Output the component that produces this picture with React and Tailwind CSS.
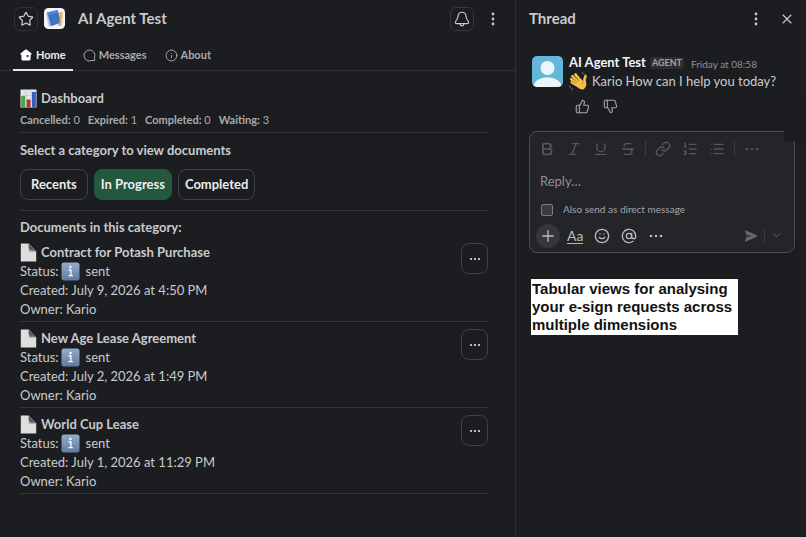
import React from "react";
import {
  Bold,
  ChevronDown,
  Info,
  Italic,
  List,
  ListOrdered,
  Plus,
  Smile,
  Star,
  Strikethrough,
  ThumbsUp,
  Underline,
  AtSign,
  X,
} from "lucide-react";

const stats = [
  { label: "Cancelled:", value: 0 },
  { label: "Expired:", value: 1 },
  { label: "Completed:", value: 0 },
  { label: "Waiting:", value: 3 },
];

const categories = ["Recents", "In Progress", "Completed"];

const documents = [
  { title: "Contract for Potash Purchase", created: "July 9, 2026 at 4:50 PM", owner: "Kario" },
  { title: "New Age Lease Agreement", created: "July 2, 2026 at 1:49 PM", owner: "Kario" },
  { title: "World Cup Lease", created: "July 1, 2026 at 11:29 PM", owner: "Kario" },
];

function AppLogo() {
  return (
    <svg viewBox="0 0 21 21" className="h-[21px] w-[21px] shrink-0" aria-hidden="true">
      <rect width="21" height="21" rx="4.5" fill="#f3f5f7" />
      <path d="M2.2 6L4.6 18.4L7.6 18.2L5 5Z" fill="#b9c9df" />
      <path d="M3.2 4.6L13.6 2L17.4 14.6L7 18.2Z" fill="#3f73c4" />
      <path d="M3.2 4.6L13.6 2L14.4 4.6L4 7.4Z" fill="#5585d0" />
      <path d="M15.6 4L18.8 4.6L17.8 18L13.8 17.6L15.4 14.8Z" fill="#c9a063" />
      <path d="M17 4.3L18.8 4.6L17.8 18L16.2 17.8Z" fill="#e3c592" />
    </svg>
  );
}

function HomeIcon() {
  return (
    <svg viewBox="0 0 12 12" className="h-3 w-3" aria-hidden="true">
      <path
        d="M5.1.8Q6 .1 6.9.8L11.3 4.2Q12 4.9 11.4 5.6Q11.1 6 10.6 5.9V10Q10.6 11.6 9 11.6H3Q1.4 11.6 1.4 10V5.9Q.9 6 .6 5.6Q0 4.9.7 4.2Z"
        fill="#fff"
      />
      <circle cx="7.6" cy="7" r="1.1" fill="#1d1e22" />
    </svg>
  );
}

function MessagesIcon() {
  return (
    <svg viewBox="0 0 13 13" className="h-[13px] w-[13px]" fill="none" stroke="currentColor" aria-hidden="true">
      <path d="M6.5 1A5.5 5.5 0 1 0 8.8 11.5H11.6Q12 11.5 11.9 11L11.2 9.2A5.5 5.5 0 0 0 6.5 1Z" strokeLinejoin="round" />
    </svg>
  );
}

function BellIcon() {
  return (
    <svg
      viewBox="0 0 16 16"
      className="h-4 w-4"
      fill="none"
      stroke="currentColor"
      strokeWidth="1.1"
      strokeLinejoin="round"
      aria-hidden="true"
    >
      <path d="M8 1.2C5.4 1.2 4.1 3.2 3.9 5.6C3.8 7.6 3.2 8.6 1.8 10.2C.8 11.6 1.4 12.6 3 12.6H13C14.6 12.6 15.2 11.6 14.2 10.2C12.8 8.6 12.2 7.6 12.1 5.6C11.9 3.2 10.6 1.2 8 1.2Z" />
      <path d="M6 12.8Q6.4 14.9 8 14.9T10 12.8" />
    </svg>
  );
}

function ChartEmoji() {
  return (
    <svg viewBox="0 0 17 19" className="h-[19px] w-[17px]" role="img" aria-label="bar chart">
      <rect x=".5" y=".5" width="16" height="18" fill="#dfe7ee" />
      <path d="M.5 6.5H16.5M.5 12.5H16.5M6 .5V18.5M11.3 .5V18.5" stroke="#b5c4d3" strokeWidth=".6" />
      <rect x="1.2" y="7" width="3.9" height="11.5" fill="#4aa648" />
      <rect x="6.6" y="10.5" width="3.9" height="8" fill="#b5352c" />
      <rect x="12" y="3" width="3.9" height="15.5" fill="#3560bb" />
    </svg>
  );
}

function PageEmoji() {
  return (
    <svg viewBox="0 0 17 19" className="h-[19px] w-[17px]" role="img" aria-label="document">
      <path d="M.8 .5H8.5L16.2 8.5V18.5H.8Z" fill="#dededc" />
      <path d="M8.5 .5L16.2 8.5H10Q8.8 8.5 8.8 7Z" fill="#85878a" />
      <path d="M8.8 1.5L14.5 7.4Q10.3 7.2 8.8 5Z" fill="#4e5054" />
    </svg>
  );
}

function InfoEmoji() {
  return (
    <svg viewBox="0 0 19 19" className="mr-1 ml-0.5 h-[19px] w-[19px]" role="img" aria-label="information">
      <defs>
        <linearGradient id="infoFill" x1="0" y1="0" x2="0" y2="1">
          <stop offset="0" stopColor="#95adcb" />
          <stop offset="1" stopColor="#5f7b9f" />
        </linearGradient>
      </defs>
      <rect x=".5" y=".5" width="18" height="18" rx="2.5" fill="url(#infoFill)" />
      <circle cx="9.5" cy="5" r="1.2" fill="#fff" />
      <path d="M7.6 8H9.9V13.6M7.4 13.7H11.8" stroke="#fff" strokeWidth="1.3" fill="none" />
    </svg>
  );
}

function WaveEmoji() {
  return (
    <svg viewBox="0 0 19 19" className="h-[19px] w-[19px]" role="img" aria-label="waving hand">
      <path d="M.6 13.5Q1 16.5 4 17.8M12.5 .8Q15 1 16 3" stroke="#5b5d61" strokeWidth="1.2" fill="none" />
      <g stroke="#f5c04a" strokeWidth="2.6" strokeLinecap="round" fill="none">
        <path d="M11 8L6.4 2.4" />
        <path d="M9 10L3.4 4.2" />
        <path d="M8 11.5L2.2 7.2" />
        <path d="M8 13.5L2.8 10.4" />
        <path d="M15.4 10.5Q15 7 16.6 4.2" />
      </g>
      <path d="M6.2 12.6L11.8 6.8L14.4 9.2Q16 8.2 17 9.4Q18.2 14.6 14.6 17.2Q10.6 18.6 6.2 12.6Z" fill="#f5c04a" />
      <path d="M9.6 8.3L5 3.6M8.4 9.9L3 5.9M7.4 11.6L2.9 9M14.4 9.4Q12.4 11 13.2 13" stroke="#a87419" strokeWidth=".6" fill="none" />
    </svg>
  );
}

function Avatar() {
  return (
    <svg viewBox="0 0 31 31" className="h-[31px] w-[31px] shrink-0" role="img" aria-label="AI Agent Test">
      <defs>
        <clipPath id="avatarClip">
          <rect width="31" height="31" rx="5" />
        </clipPath>
      </defs>
      <g clipPath="url(#avatarClip)">
        <rect width="31" height="31" fill="#63b8d9" />
        <circle cx="15.5" cy="12" r="7" fill="#edf5fb" />
        <ellipse cx="15.5" cy="31" rx="14" ry="9.8" fill="#edf5fb" />
      </g>
    </svg>
  );
}

function LinkIcon() {
  return (
    <svg viewBox="0 0 24 24" width="16" height="16" fill="none" stroke="currentColor" strokeWidth="2" strokeLinecap="round" aria-hidden="true">
      <path d="M10 13a5 5 0 0 0 7.54.54l3-3a5 5 0 0 0-7.07-7.07l-1.72 1.71" />
      <path d="M14 11a5 5 0 0 0-7.54-.54l-3 3a5 5 0 0 0 7.07 7.07l1.71-1.71" />
    </svg>
  );
}

function VerticalDots() {
  return (
    <svg viewBox="0 0 16 16" className="h-4 w-4" fill="currentColor" aria-hidden="true">
      <circle cx="8" cy="3" r="1.4" />
      <circle cx="8" cy="8" r="1.4" />
      <circle cx="8" cy="13" r="1.4" />
    </svg>
  );
}

function Dots() {
  return (
    <svg viewBox="0 0 16 16" className="h-4 w-4" fill="currentColor" aria-hidden="true">
      <circle cx="3" cy="8" r="1.3" />
      <circle cx="8" cy="8" r="1.3" />
      <circle cx="13" cy="8" r="1.3" />
    </svg>
  );
}

function Document({ doc }) {
  return (
    <li className="flex items-start justify-between border-b border-[#323337] pt-[7px] pb-[2px]">
      <div className="text-[13px] leading-[19px]">
        <h3 className="flex items-center gap-1 font-bold">
          <PageEmoji />
          {doc.title}
        </h3>
        <p className="flex items-center">
          Status:
          <InfoEmoji />
          <span className="pl-0.5">sent</span>
        </p>
        <p>Created: {doc.created}</p>
        <p>Owner: {doc.owner}</p>
      </div>
      <button
        aria-label={`Actions for ${doc.title}`}
        className="flex h-[31px] w-[27px] items-center justify-center rounded-lg border border-[#404145] text-[#e2e2e3]"
      >
        <svg viewBox="0 0 14 14" className="h-3.5 w-3.5" fill="currentColor" aria-hidden="true">
          <circle cx="3" cy="7" r="1.1" />
          <circle cx="7" cy="7" r="1.1" />
          <circle cx="11" cy="7" r="1.1" />
        </svg>
      </button>
    </li>
  );
}

function Composer() {
  return (
    <form className="rounded-lg border border-[#4b4c50] bg-[#242528]" onSubmit={(e) => e.preventDefault()}>
      <div className="flex h-[33px] items-center gap-[11px] px-[9px] text-[#56575b]">
        <button type="button" aria-label="Bold"><Bold size={16} strokeWidth={2.6} /></button>
        <button type="button" aria-label="Italic"><Italic size={16} /></button>
        <button type="button" aria-label="Underline"><Underline size={16} /></button>
        <button type="button" aria-label="Strikethrough"><Strikethrough size={16} /></button>
        <span className="-mx-0.5 h-4 w-px bg-[#3a3b3f]"></span>
        <button type="button" aria-label="Link"><LinkIcon /></button>
        <button type="button" aria-label="Numbered list"><ListOrdered size={16} /></button>
        <button type="button" aria-label="Bulleted list"><List size={16} /></button>
        <span className="-mx-0.5 h-4 w-px bg-[#3a3b3f]"></span>
        <button type="button" aria-label="More formatting"><Dots /></button>
      </div>
      <input
        type="text"
        aria-label="Reply"
        placeholder="Reply…"
        className="block h-[31px] w-full bg-transparent px-[10px] text-[13px] outline-none placeholder:text-[#8f9093]"
      />
      <label className="flex h-[27px] items-center gap-[10px] px-[11px] text-[10px] text-[#a3a4a7]">
        <input type="checkbox" className="h-3 w-3 appearance-none rounded-xs border border-[#7b7c7f] bg-[#3a3b3e]" />
        Also send as direct message
      </label>
      <div className="flex h-[29px] items-center justify-between pr-3 pb-1 pl-[6px] text-[#b9babd]">
        <div className="flex items-center gap-[11px]">
          <button type="button" aria-label="Attach" className="flex h-6 w-6 items-center justify-center rounded-full bg-[#35363a]">
            <Plus size={18} strokeWidth={1.8} />
          </button>
          <button type="button" aria-label="Formatting" className="-ml-1 border-b border-current text-[14px] leading-[15px]">
            Aa
          </button>
          <button type="button" aria-label="Emoji"><Smile size={16} /></button>
          <button type="button" aria-label="Mention"><AtSign size={16} /></button>
          <button type="button" aria-label="More"><Dots /></button>
        </div>
        <div className="flex items-center gap-[6px] text-[#66676b]">
          <button type="submit" aria-label="Send">
            <svg viewBox="0 0 14 14" className="h-3.5 w-3.5" fill="currentColor" aria-hidden="true">
              <path d="M1.6 1.2L13.2 6.6Q13.6 7 13.2 7.4L1.6 12.8Q.9 13 1 12.2L2.3 7.9L8.5 7L2.3 6.1L1 1.8Q.9 1 1.6 1.2Z" />
            </svg>
          </button>
          <span className="h-4 w-px bg-[#3a3b3f]"></span>
          <button type="button" aria-label="Send options"><ChevronDown size={11} /></button>
        </div>
      </div>
    </form>
  );
}

export default function App() {
  const [active, setActive] = React.useState("In Progress");

  return (
    <div className="flex min-h-screen bg-[#1c1d21] font-['Lato',sans-serif] text-[#c9cacc]">
      <main className="min-w-0 flex-1">
        {/* Header */}
        <header className="border-b border-[#2f3034]">
          <div className="flex h-[37px] items-center justify-between px-[14px]">
            <div className="flex items-center">
              <button aria-label="Star" className="flex h-6 w-6 items-center justify-center rounded-md border border-[#303135]">
                <Star size={16} strokeWidth={1.8} />
              </button>
              <span className="ml-1.5 flex"><AppLogo /></span>
              <h1 className="ml-[13px] text-[15px] font-bold">AI Agent Test</h1>
            </div>
            <div className="flex items-center gap-[11px]">
              <button aria-label="Notifications" className="flex h-6 w-6 items-center justify-center rounded-md border border-[#37383c]">
                <BellIcon />
              </button>
              <button aria-label="More"><VerticalDots /></button>
            </div>
          </div>
          <nav className="flex h-[33px] gap-[10px] pl-[13px] text-[11px] font-bold text-[#a9aaad]">
            <a href="#home" className="-mb-px flex items-center gap-1 border-b-2 border-[#e8e8e9] px-[7px] pt-1 text-[#ececed]">
              <HomeIcon />
              Home
            </a>
            <a href="#messages" className="flex items-center gap-[3px] pt-1">
              <MessagesIcon />
              Messages
            </a>
            <a href="#about" className="flex items-center gap-[3px] pt-1 pl-2">
              <Info size={13} strokeWidth={1.8} />
              About
            </a>
          </nav>
        </header>

        <div className="pr-[27px] pl-5">
          {/* Dashboard */}
          <section className="border-b border-[#323337] pt-[17px] pb-[3px]">
            <h2 className="flex items-center gap-1 text-[13px] leading-[20px] font-bold">
              <ChartEmoji />
              Dashboard
            </h2>
            <p className="mt-[3px] flex gap-2 text-[11px] leading-[18px] text-[#a9aaad]">
              {stats.map((s) => (
                <span key={s.label}>
                  <b>{s.label}</b> {s.value}
                </span>
              ))}
            </p>
          </section>

          {/* Categories */}
          <section className="border-b border-[#323337] pt-2 pb-[10px]">
            <h2 className="text-[13px] leading-[19px] font-bold">Select a category to view documents</h2>
            <div className="mt-[9px] flex gap-1.5">
              {categories.map((c) => (
                <button
                  key={c}
                  onClick={() => setActive(c)}
                  className={`h-[31px] rounded-lg border text-[13px] font-bold text-[#ececed] ${
                    c === "Recents" ? "px-[10px]" : "px-[6px]"
                  } ${active === c ? "border-[#23573e] bg-[#23573e]" : "border-[#404145]"}`}
                >
                  {c}
                </button>
              ))}
            </div>
          </section>

          {/* Documents */}
          <section className="pt-[7px]">
            <h2 className="text-[13px] leading-[18px] font-bold">Documents in this category:</h2>
            <ul>
              {documents.map((doc) => (
                <Document key={doc.title} doc={doc} />
              ))}
            </ul>
          </section>
        </div>
      </main>

      {/* Thread */}
      <aside className="w-[291px] shrink-0 border-l border-[#303135] pr-[11px] pl-[13px]">
        <div className="flex h-[37px] items-center justify-between">
          <h2 className="text-[15px] font-bold">Thread</h2>
          <div className="flex items-center gap-[15px]">
            <button aria-label="More"><VerticalDots /></button>
            <button aria-label="Close"><X size={16} strokeWidth={1.6} /></button>
          </div>
        </div>

        <article className="mt-[17px] flex gap-[6px] pl-[3px]">
          <span className="mt-0.5"><Avatar /></span>
          <div className="whitespace-nowrap">
            <div className="flex h-[18px] items-center">
              <h3 className="text-[13px] font-bold text-[#f4f4f5]">AI Agent Test</h3>
              <span className="ml-1 rounded-xs bg-[#2d2e32] px-0.5 text-[9px] leading-[12px] font-bold text-[#a3a4a7]">AGENT</span>
              <time className="ml-[7px] pt-0.5 text-[10px] text-[#8f9093]">Friday at 08:58</time>
            </div>
            <p className="flex h-[19px] items-center gap-1 text-[13px]">
              <WaveEmoji />
              Kario How can I help you today?
            </p>
            <div className="mt-2 flex gap-[13px] pl-[6px] text-[#a3a4a7]">
              <button aria-label="Good response"><ThumbsUp size={15} strokeWidth={1.8} /></button>
              <button aria-label="Bad response"><ThumbsUp size={15} strokeWidth={1.8} className="-scale-y-100" /></button>
            </div>
          </div>
        </article>

        <div className="relative mt-[17px]">
          <Composer />
          {/* edge of the hover toolbar's backdrop */}
          <div className="absolute -top-8 -right-[11px] h-[42px] w-[22px] bg-[#1b1c1f]" aria-hidden="true"></div>
        </div>

        <p className="mt-[26px] ml-0.5 w-fit bg-white py-px pr-[6px] pl-px font-['Liberation_Sans',sans-serif] text-[15px] leading-[18px] font-bold text-[#111]">
          Tabular views for analysing
          <br />
          your e-sign requests across
          <br />
          multiple dimensions
        </p>
      </aside>
    </div>
  );
}
